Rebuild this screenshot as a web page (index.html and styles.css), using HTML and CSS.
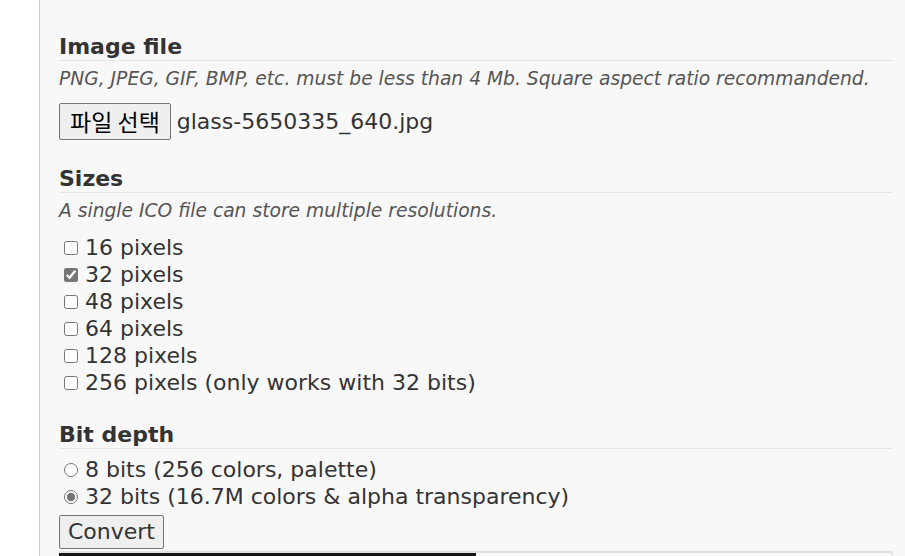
FILE: index.html
```html
<!DOCTYPE html>
<html>
<head>
<meta charset="utf-8">
<link rel="stylesheet" href="styles.css">
</head>
<body>
<div class="page">
  <div class="gutter"></div>
  <div class="panel">
    <form class="form">
      <section class="group group-first">
        <h3 class="heading">Image file</h3>
        <p class="desc">PNG, JPEG, GIF, BMP, etc. must be less than 4 Mb. Square aspect ratio recommandend.</p>
        <div class="file-row"><span class="btn file-btn">파일 선택</span><span class="filename">glass-5650335_640.jpg</span></div>
      </section>
      <section class="group">
        <h3 class="heading">Sizes</h3>
        <p class="desc">A single ICO file can store multiple resolutions.</p>
        <div class="opts">
          <label class="opt"><input type="checkbox"> 16 pixels</label>
          <label class="opt"><input type="checkbox" checked> 32 pixels</label>
          <label class="opt"><input type="checkbox"> 48 pixels</label>
          <label class="opt"><input type="checkbox"> 64 pixels</label>
          <label class="opt"><input type="checkbox"> 128 pixels</label>
          <label class="opt"><input type="checkbox"> 256 pixels (only works with 32 bits)</label>
        </div>
      </section>
      <section class="group">
        <h3 class="heading">Bit depth</h3>
        <div class="opts opts-radio">
          <label class="opt"><input type="radio" name="bits"> 8 bits (256 colors, palette)</label>
          <label class="opt"><input type="radio" name="bits" checked> 32 bits (16.7M colors &amp; alpha transparency)</label>
        </div>
        <span class="btn convert-btn">Convert</span>
      </section>
    </form>
    <div class="ad">
      <div class="ad-img"></div>
      <div class="ad-space"></div>
      <div class="ad-icons">
        <span class="ad-icon ad-icon-a"></span>
        <span class="ad-icon ad-icon-b"></span>
      </div>
    </div>
  </div>
</div>
</body>
</html>
```

FILE: styles.css
```css
html, body {
  margin: 0;
  padding: 0;
  background: #ffffff;
  height: 100%;
  overflow: hidden;
}
.page {
  display: flex;
  height: 556px;
  font-family: "DejaVu Sans", Verdana, sans-serif;
  color: #333333;
}
.gutter {
  width: 39px;
  flex: none;
  background: #ffffff;
}
.panel {
  flex: 1;
  background: #f8f8f8;
  border-left: 1px solid #d0d0d0;
  padding: 0 12px 0 19px;
  display: flex;
  flex-direction: column;
}
.form {
  padding-top: 33px;
}
.group {
  margin-top: 25px;
}
.group-first {
  margin-top: 0;
}
.heading {
  margin: 0;
  font-size: 22px;
  font-weight: bold;
  line-height: 27px;
  color: #333333;
  border-bottom: 1px solid #e6e6e6;
}
.desc {
  margin: 5px 0 0;
  font-size: 18.7px;
  font-style: italic;
  line-height: 26px;
  color: #555555;
}
.file-row {
  display: flex;
  align-items: center;
  margin-top: 11px;
  font-size: 22px;
}
.btn {
  display: inline-block;
  border: 1px solid #767676;
  border-radius: 2px;
  background: #efefef;
  color: #000000;
  font-size: 22px;
  line-height: 28px;
  padding: 2px 8px;
}
.file-btn {
  font-family: "Noto Sans CJK KR", sans-serif;
  font-size: 23px;
  line-height: 29px;
  padding: 3px 10px 3px;
}
.filename {
  margin-left: 6px;
  color: #333333;
}
.opts {
  margin-top: 10px;
  display: flex;
  flex-direction: column;
}
.opts-radio {
  margin-top: 7px;
}
.opt {
  font-size: 22px;
  line-height: 27px;
  color: #333333;
}
.opt input {
  accent-color: #767676;
  margin: 3px 0 3px 5px;
  width: 14px;
  height: 14px;
}
.convert-btn {
  margin-top: 5px;
  color: #333333;
}
.ad {
  margin-top: 2px;
  display: flex;
  height: 20px;
  border-top: 2px solid #e2e2e2;
  border-right: 2px solid #e2e2e2;
}
.ad-img {
  width: 417px;
  background: #141414;
}
.ad-space {
  flex: 1;
}
.ad-icons {
  display: flex;
  gap: 6px;
  padding-right: 4px;
}
.ad-icon {
  width: 14px;
  height: 8px;
  margin-top: 3px;
  border-radius: 7px 7px 0 0;
  border: 2px solid #17b7cf;
  border-bottom: none;
}
.ad-icon-b {
  border-color: #c9e9ef;
  border-left: 1px solid #d0d0d0;
  border-radius: 0;
  width: 18px;
}
```
